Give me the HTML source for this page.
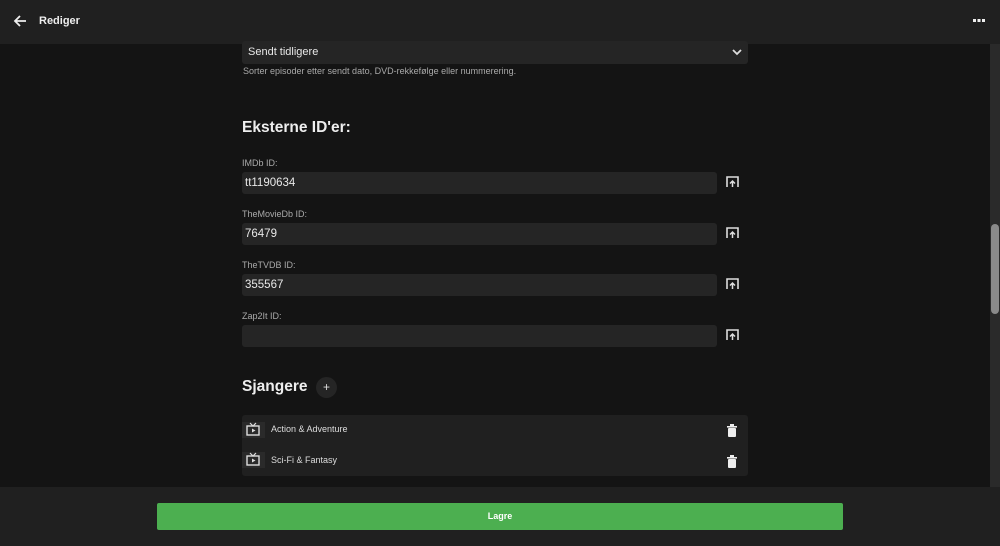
<!DOCTYPE html><html><head><style>
body{margin:0;width:1000px;height:546px;background:#141414;font-family:"Liberation Sans",sans-serif;color:#ddd;position:relative;overflow:hidden}
.a{position:absolute}
.hdr{left:0;top:0;width:1000px;height:44px;background:#202020}
.inp{background:#252525;border-radius:3px;height:22px;left:242px;width:475px;font-size:11.5px;color:#e8e8e8;line-height:22px;padding-left:3px;box-sizing:border-box}
.lbl{font-size:9px;color:#aaa;left:242px}
</style></head><body>
<div class="a hdr"></div>
<svg class="a" style="left:13px;top:14px" width="14" height="14" viewBox="0 0 14 14"><path d="M13 7H2M7 2L2 7l5 5" stroke="#eee" stroke-width="1.8" fill="none"/></svg>
<div class="a" style="left:39px;top:15px;font-size:11px;font-weight:bold;color:#eee">Rediger</div>
<svg class="a" style="left:973px;top:19px" width="12" height="4"><rect x="0" y="0" width="3" height="3" fill="#eee"/><rect x="4.5" y="0" width="3" height="3" fill="#eee"/><rect x="9" y="0" width="3" height="3" fill="#eee"/></svg>
<div class="a" style="left:990px;top:44px;width:10px;height:443px;background:#2a2a2a"></div>
<div class="a" style="left:991px;top:224px;width:8px;height:90px;background:#8a8a8a;border-radius:4px"></div>
<div class="a inp" style="top:41px;width:506px;padding-left:6px;height:23px;line-height:22px;font-size:11px">Sendt tidligere</div>
<svg class="a" style="left:732px;top:49px" width="10" height="7"><path d="M1 1l4 4 4-4" stroke="#ddd" stroke-width="1.8" fill="none"/></svg>
<div class="a" style="left:243px;top:66px;font-size:9px;color:#aaa">Sorter episoder etter sendt dato, DVD-rekkefølge eller nummerering.</div>
<div class="a" style="left:242px;top:119px;font-size:15.5px;font-weight:bold;color:#eee">Eksterne ID'er:</div>
<svg width="0" height="0" style="position:absolute"><defs><g id="up"><path d="M1 11V1h11v10" stroke="#ddd" stroke-width="1.6" fill="none"/><path d="M6.5 11V5M4 7.5l2.5-2.5 2.5 2.5" stroke="#ddd" stroke-width="1.5" fill="none"/></g><g id="tv"><rect x="1" y="4" width="12" height="9" stroke="#ddd" stroke-width="1.4" fill="none"/><path d="M4 1l3 3 3-3" stroke="#ddd" stroke-width="1.2" fill="none"/><path d="M6 6.5v4l3.5-2z" fill="#ddd"/></g><g id="tr"><rect x="0" y="2" width="10" height="1.6" fill="#eee"/><rect x="3" y="0" width="4" height="2" fill="#eee"/><rect x="1" y="4" width="8" height="9" rx="1" fill="#eee"/></g></defs></svg>
<div class="a lbl" style="top:158px">IMDb ID:</div><div class="a inp" style="top:172px">tt1190634</div><svg class="a" style="left:726px;top:176px" width="13" height="12"><use href="#up"/></svg>
<div class="a lbl" style="top:209px">TheMovieDb ID:</div><div class="a inp" style="top:223px">76479</div><svg class="a" style="left:726px;top:227px" width="13" height="12"><use href="#up"/></svg>
<div class="a lbl" style="top:260px">TheTVDB ID:</div><div class="a inp" style="top:274px">355567</div><svg class="a" style="left:726px;top:278px" width="13" height="12"><use href="#up"/></svg>
<div class="a lbl" style="top:311px">Zap2It ID:</div><div class="a inp" style="top:325px"></div><svg class="a" style="left:726px;top:329px" width="13" height="12"><use href="#up"/></svg>
<div class="a" style="left:242px;top:378px;font-size:15.5px;font-weight:bold;color:#eee">Sjangere</div>
<div class="a" style="left:316px;top:377px;width:21px;height:21px;border-radius:50%;background:#252525;color:#ddd;font-size:12px;text-align:center;line-height:20px">+</div>
<div class="a" style="left:242px;top:415px;width:506px;height:61px;background:#202020;border-radius:3px"></div>
<div class="a" style="left:242px;top:422px;width:23px;height:16px;background:#2a2a2a"></div>
<div class="a" style="left:242px;top:452px;width:23px;height:16px;background:#2a2a2a"></div>
<svg class="a" style="left:246px;top:422px" width="14" height="14"><use href="#tv"/></svg>
<svg class="a" style="left:246px;top:452px" width="14" height="14"><use href="#tv"/></svg>
<div class="a" style="left:271px;top:424px;font-size:9px;color:#ddd">Action &amp; Adventure</div>
<div class="a" style="left:271px;top:455px;font-size:9px;color:#ddd">Sci-Fi &amp; Fantasy</div>
<svg class="a" style="left:727px;top:424px" width="10" height="13"><use href="#tr"/></svg>
<svg class="a" style="left:727px;top:455px" width="10" height="13"><use href="#tr"/></svg>
<div class="a" style="left:0;top:487px;width:1000px;height:59px;background:#202020"></div>
<div class="a" style="left:157px;top:503px;width:686px;height:27px;background:#4caf50;border-radius:2px;color:#fff;font-size:9px;font-weight:bold;text-align:center;line-height:27px">Lagre</div>
</body></html>
